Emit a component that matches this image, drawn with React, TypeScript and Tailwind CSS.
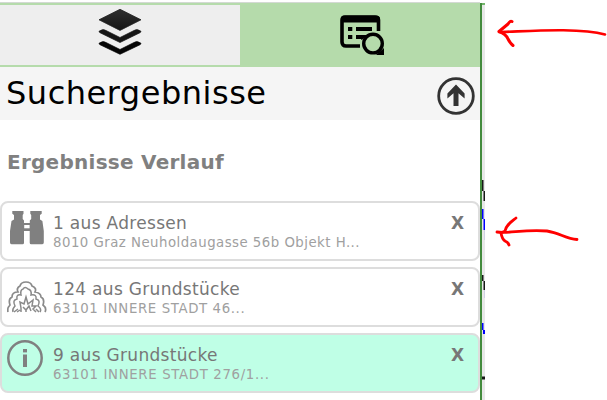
import type { ReactNode } from 'react';

function LayersIcon() {
  return (
    <svg className="block" width="44" height="46" viewBox="0 0 44 46" strokeLinejoin="round">
      <defs>
        <linearGradient id="layers" x1="0" y1="0" x2="0" y2="1">
          <stop offset="0" stopColor="#303030" />
          <stop offset="1" stopColor="#161616" />
        </linearGradient>
      </defs>
      <path d="M22 0.3 43 10.8 22 21.4 1 10.8Z" fill="url(#layers)" stroke="#222" strokeWidth="0.8" />
      <path d="M1 22.3Q5 19.2 8 21.5L22 28.5 36 21.5Q39 19.2 43 22.3Q43 23.2 42 23.7L22 33.5 2 23.7Q1 23.2 1 22.3Z" fill="#151515" stroke="#151515" strokeWidth="0.7" />
      <path d="M1 34.3Q5 31.2 8 33.5L22 40.5 36 33.5Q39 31.2 43 34.3Q43 35.2 42 35.7L22 45.3 2 35.7Q1 35.2 1 34.3Z" fill="#050505" stroke="#050505" strokeWidth="0.7" />
    </svg>
  );
}

function ResultsIcon() {
  return (
    <svg className="block" width="44" height="40" viewBox="0 0 44 40" fill="none" stroke="#000">
      <path d="M20 31H6Q2 31 2 27V5Q2 2 5 2H35Q38.5 2 38.5 5V16" strokeWidth="3.6" />
      <path d="M1 7.5V4Q1 0.8 4 0.8H36Q40 0.8 40 4V7.5Z" fill="#000" stroke="none" />
      <path d="M8 14H12.3M16 14H32M8 22H12.3M16 22H22.3L20.5 23.5" strokeWidth="3.8" />
      <path d="M36 40H44V33Z" fill="#000" stroke="none" />
      <circle cx="33" cy="28.6" r="9.3" strokeWidth="3.4" fill="#b5dbab" />
    </svg>
  );
}

function UpIcon() {
  return (
    <svg className="block" width="38" height="38" viewBox="0 0 38 38">
      <circle cx="19" cy="19" r="17.3" fill="none" stroke="#333" strokeWidth="2.8" />
      <path d="M19 7.5 27.6 16.6V21.6L21.5 16.3V28.9H16.5V16.3L10.4 21.6V16.6Z" fill="#333" />
    </svg>
  );
}

function BinocularsIcon() {
  return (
    <svg className="block" width="34" height="34" viewBox="0 0 34 34" fill="#808080">
      <path d="M2.3 0H13.5V2.8L12.7 4V8L14 9.5V12H19.8V9.5L21.2 8V4L20.3 2.8V0H31.7V2.8L30 4V8.5L32.4 10 33.8 20V31.5Q33.8 33.2 32.3 33.2H21.2Q19.7 33.2 19.7 31.7V20H14V31.7Q14 33.2 12.6 33.2H1.5Q0 33.2 0 31.5V20L1.5 10 4 8.5V4L2.3 2.8Z" />
      <path d="M14.2 14H19.6V17.3H14.2Z" fill="#fff" />
    </svg>
  );
}

function TreeIcon() {
  return (
    <svg className="block" width="40" height="34" viewBox="0 0 40 34" fill="none" stroke="#8a8a8a" strokeWidth="1.7">
      <path d="M1 31Q0 27 3 24Q1 18 5 16Q5 11 11 11Q9 7 13 5Q14 1 19 1Q24 1 25 5Q30 7 28 11Q34 12 34 16Q38 18 36 24Q40 27 38 31" />
      <path d="M6 31Q5 28 8 25Q5 19 10 18Q9 13 14 14Q13 9 16 8Q18 5 21 8Q25 9 24 14Q30 13 29 18Q34 19 31 25Q35 28 33 31" strokeWidth="1.5" />
      <path d="M7 31 11 28M10 31 13 29M14 31V27L13 21 17 23 19 16 21 23 26 19 25 25 29 25 26 28 29 31M16 26 19 29 22 25 24 30M32 31 29 28M19 29V31" strokeWidth="1.5" />
    </svg>
  );
}

function InfoIcon() {
  return (
    <svg className="block" width="36" height="36" viewBox="0 0 36 36" fill="#808080">
      <circle cx="18" cy="18" r="16.7" fill="none" stroke="#808080" strokeWidth="2.5" />
      <rect x="16" y="9" width="4" height="3.4" />
      <rect x="16" y="14.5" width="4" height="12.5" />
    </svg>
  );
}

type ResultProps = {
  icon: ReactNode;
  iconClass: string;
  title: string;
  detail: string;
  detailClass: string;
  active?: boolean;
};

function Result({ icon, iconClass, title, detail, detailClass, active }: ResultProps) {
  return (
    <div className={`flex h-[60px] rounded-lg border-2 border-[#dddddd] ${active ? 'bg-[#bfffe6]' : 'bg-white'}`}>
      <div className={`w-[51px] shrink-0 ${iconClass}`}>{icon}</div>
      <div className="flex-1 whitespace-nowrap pt-[10px]">
        <div className="text-[17px] leading-5 tracking-[0.31px] text-[#777777]">{title}</div>
        <div className={`mt-px text-[13.3px] leading-[18px] text-[#a0a0a0] ${detailClass}`}>{detail}</div>
      </div>
      <button className="mr-[14px] mt-[10px] h-5 text-[17px] font-bold leading-5 text-[#777777]">X</button>
    </div>
  );
}

export default function App() {
  return (
    <div className="relative flex h-[400px] w-[607px] overflow-hidden bg-white pt-[2px] font-['DejaVu_Sans',Verdana,sans-serif]">
      <div className="w-[480px] shrink-0">
        <div className="h-px bg-[#d4d9d4]" />
        <div className="flex h-16 bg-[#b5dbab] py-[2px]">
          <button className="flex w-60 justify-center bg-[#eeeeee] pt-[4px]"><LayersIcon /></button>
          <button className="flex w-60 justify-center pl-[4px] pt-[10px]"><ResultsIcon /></button>
        </div>
        <div className="flex h-[53px] justify-between bg-[#f5f5f5] pl-[6px] pr-[5px]">
          <h1 className="whitespace-nowrap pt-[6px] text-[32px] leading-10 tracking-[0.52px] text-black">Suchergebnisse</h1>
          <button className="mt-[10px] h-[38px]"><UpIcon /></button>
        </div>
        <h2 className="mt-[28px] whitespace-nowrap pl-[7px] text-[20px] font-bold leading-7 tracking-[0.26px] text-[#808080]">Ergebnisse Verlauf</h2>
        <div className="mt-[25px] flex flex-col gap-[6px]">
          <Result icon={<BinocularsIcon />} iconClass="pl-[8px] pt-[8px]" title="1 aus Adressen" detail="8010 Graz Neuholdaugasse 56b Objekt H..." detailClass="tracking-[0.48px]" />
          <Result icon={<TreeIcon />} iconClass="pl-[5px] pt-[12px]" title="124 aus Grundstücke" detail="63101 INNERE STADT 46..." detailClass="tracking-[0.62px]" />
          <Result icon={<InfoIcon />} iconClass="pl-[5px] pt-[5px]" title="9 aus Grundstücke" detail="63101 INNERE STADT 276/1..." detailClass="tracking-[0.66px]" active />
        </div>
      </div>
      <div className="mt-px w-[2px] shrink-0 bg-[#438b3d]" />
      <div className="mt-px w-[3px] shrink-0 border-t-2 border-[#72b46b] bg-[#e8e8e8]" />
      <svg className="absolute left-[482px] top-0" width="125" height="400" viewBox="0 0 125 400">
        <path d="M0 180h1.5v11h-1.5zM1.5 191h1.5v10h-1.5zM0 275h1.5v6h-1.5zM1.5 281h1.5v9h-1.5zM0 376.5h3v3h-3z" fill="#171717" />
        <path d="M0 209h1.5v10h-1.5zM1.5 219h1.5v11h-1.5zM0 323h1.5v7h-1.5zM1 330h2v4h-2z" fill="#0000ff" />
        <path d="M2 230h1v10h-1zM2 290h1v8h-1z" fill="#d0d0e4" />
        <g fill="none" stroke="#f00" strokeWidth="2.6" strokeLinecap="round" strokeLinejoin="round">
          <path d="M17 32C42 31.5 96 27 123 34.5" />
          <path d="M30 21.5Q28 20.5 26 24L17 31.5Q24 34 26 39Q28 43 31 45.5" strokeWidth="3" />
          <path d="M15 232C26 234 42 229 65 231C78 233 84 239 95 239.5" strokeWidth="2.8" />
          <path d="M34 218C29 222 24 225 23 231L19 233Q20 239 23 241Q26 242 27 245" strokeWidth="2.8" />
        </g>
      </svg>
    </div>
  );
}
